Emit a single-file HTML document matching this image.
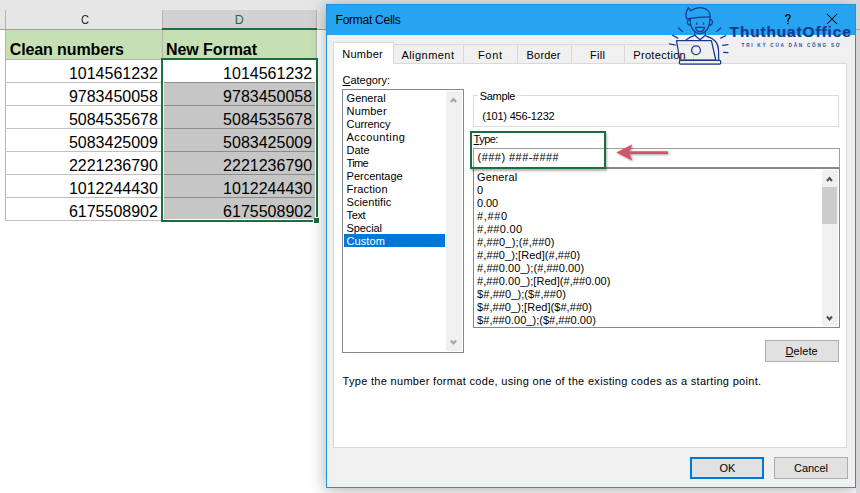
<!DOCTYPE html>
<html><head><meta charset="utf-8"><style>
html,body{margin:0;padding:0;width:860px;height:493px;overflow:hidden;background:#fff;position:relative}
body>div,body>svg{position:absolute}
.t{position:absolute;white-space:nowrap;font-family:"Liberation Sans",sans-serif}
u{text-decoration:underline;text-underline-offset:1px}
</style></head><body>
<div style="left:0px;top:0px;width:326px;height:29px;background:#e6e6e6"></div>
<div style="left:163px;top:10px;width:153px;height:18px;background:#d2d2d2"></div>
<div style="left:5px;top:10px;width:1px;height:19px;background:#b4b4b4"></div>
<div style="left:162px;top:10px;width:1px;height:19px;background:#b4b4b4"></div>
<div style="left:316px;top:10px;width:1px;height:19px;background:#b4b4b4"></div>
<div style="left:0px;top:29px;width:326px;height:1px;background:#9e9e9e"></div>
<div style="left:162px;top:28px;width:155px;height:2px;background:#1b6e3f"></div>
<div style="left:6px;top:30px;width:310px;height:29px;background:#c6e0b4"></div>
<div style="left:5px;top:30px;width:1px;height:191px;background:#b4b4b4"></div>
<div style="left:162px;top:30px;width:1px;height:29px;background:#b4b4b4"></div>
<div style="left:5px;top:59px;width:157px;height:1px;background:#b4b4b4"></div>
<div style="left:316px;top:30px;width:1px;height:28px;background:#b4b4b4"></div>
<div style="left:164px;top:83px;width:151px;height:136px;background:#c6c6c6"></div>
<div style="left:5px;top:82px;width:156px;height:1px;background:#c0c0c0"></div>
<div style="left:164px;top:82px;width:151px;height:1px;background:#8c8c8c"></div>
<div style="left:5px;top:105px;width:156px;height:1px;background:#c0c0c0"></div>
<div style="left:164px;top:105px;width:151px;height:1px;background:#8c8c8c"></div>
<div style="left:5px;top:128px;width:156px;height:1px;background:#c0c0c0"></div>
<div style="left:164px;top:128px;width:151px;height:1px;background:#8c8c8c"></div>
<div style="left:5px;top:151px;width:156px;height:1px;background:#c0c0c0"></div>
<div style="left:164px;top:151px;width:151px;height:1px;background:#8c8c8c"></div>
<div style="left:5px;top:174px;width:156px;height:1px;background:#c0c0c0"></div>
<div style="left:164px;top:174px;width:151px;height:1px;background:#8c8c8c"></div>
<div style="left:5px;top:197px;width:156px;height:1px;background:#c0c0c0"></div>
<div style="left:164px;top:197px;width:151px;height:1px;background:#8c8c8c"></div>
<div style="left:5px;top:220px;width:156px;height:1px;background:#c0c0c0"></div>
<div style="left:161px;top:58px;width:157px;height:2px;background:#1b6e3f"></div>
<div style="left:161px;top:58px;width:2px;height:164px;background:#1b6e3f"></div>
<div style="left:316px;top:58px;width:2px;height:159px;background:#1b6e3f"></div>
<div style="left:161px;top:220px;width:152px;height:2px;background:#1b6e3f"></div>
<div style="left:314px;top:218px;width:5px;height:5px;background:#1b6e3f"></div>
<div style="left:316px;top:0px;width:544px;height:10px;background:#e6e6e6"></div>
<div style="left:326px;top:4px;width:530px;height:484px;background:#f0f0f0;box-sizing:border-box;border:1px solid #1894ea;box-shadow:0 2px 16px rgba(0,0,0,0.33)"></div>
<div style="left:327px;top:5px;width:528px;height:30px;background:#27a4f1"></div>
<div style="left:856px;top:0px;width:4px;height:493px;background:linear-gradient(180deg,#d6d6d6 0px,#d6d6d6 29px,#a8a8a8 29px,#a8a8a8 30px,#d4d4d4 30px,#d4d4d4 480px,#d8d8d8 493px)"></div>
<div style="left:333px;top:63px;width:514px;height:385px;background:#fff;box-sizing:border-box;border:1px solid #d9d9d9"></div>
<div style="left:393px;top:44px;width:71px;height:20px;background:#f0f0f0;box-sizing:border-box;border:1px solid #d9d9d9"></div>
<div style="left:463px;top:44px;width:55px;height:20px;background:#f0f0f0;box-sizing:border-box;border:1px solid #d9d9d9"></div>
<div style="left:517px;top:44px;width:55px;height:20px;background:#f0f0f0;box-sizing:border-box;border:1px solid #d9d9d9"></div>
<div style="left:571px;top:44px;width:54px;height:20px;background:#f0f0f0;box-sizing:border-box;border:1px solid #d9d9d9"></div>
<div style="left:624px;top:44px;width:70px;height:20px;background:#f0f0f0;box-sizing:border-box;border:1px solid #d9d9d9"></div>
<div style="left:333px;top:42px;width:61px;height:22px;background:#fff;box-sizing:border-box;border:1px solid #d9d9d9;border-bottom:none"></div>
<div style="left:342px;top:89px;width:122px;height:264px;background:#fff;box-sizing:border-box;border:1px solid #828790"></div>
<div style="left:446px;top:91px;width:16px;height:260px;background:#f0f0f0"></div>
<div style="left:344px;top:234px;width:101px;height:13px;background:#0078d7"></div>
<div style="left:473px;top:95px;width:366px;height:32px;box-sizing:border-box;border:1px solid #dcdcdc"></div>
<div style="left:478px;top:90px;width:39px;height:10px;background:#fff"></div>
<div style="left:473px;top:148px;width:367px;height:20px;background:#fff;box-sizing:border-box;border:1px solid #a0a0a0;border-bottom-color:#8a8a8a"></div>
<div style="left:473px;top:168px;width:367px;height:160px;background:#fff;box-sizing:border-box;border:1px solid #828790"></div>
<div style="left:822px;top:170px;width:16px;height:156px;background:#f0f0f0"></div>
<div style="left:822px;top:187px;width:15px;height:37px;background:#cdcdcd"></div>
<div style="left:765px;top:340px;width:74px;height:22px;background:#e1e1e1;box-sizing:border-box;border:1px solid #adadad"></div>
<div style="left:690px;top:457px;width:74px;height:22px;background:#e1e1e1;box-sizing:border-box;border:2px solid #0078d7"></div>
<div style="left:774px;top:457px;width:74px;height:22px;background:#e1e1e1;box-sizing:border-box;border:1px solid #adadad"></div>
<div class="t" style="left:80.60px;top:11px;font-size:12.5px;line-height:18px;color:#262626;transform-origin:0 0;transform:scaleX(0.9);">C</div>
<div class="t" style="left:234.70px;top:11px;font-size:12.5px;line-height:18px;color:#1b6e3f;">D</div>
<div class="t" style="left:9.80px;top:39px;font-size:16px;line-height:22px;color:#000;font-weight:bold;letter-spacing:-0.12px;">Clean numbers</div>
<div class="t" style="left:166.00px;top:39px;font-size:16px;line-height:22px;color:#000;font-weight:bold;letter-spacing:-0.06px;">New Format</div>
<div class="t" style="left:68.91px;top:63px;font-size:16px;line-height:22px;color:#000;">1014561232</div>
<div class="t" style="left:223.11px;top:63px;font-size:16px;line-height:22px;color:#000;">1014561232</div>
<div class="t" style="left:68.91px;top:86px;font-size:16px;line-height:22px;color:#000;">9783450058</div>
<div class="t" style="left:223.11px;top:86px;font-size:16px;line-height:22px;color:#000;">9783450058</div>
<div class="t" style="left:68.91px;top:109px;font-size:16px;line-height:22px;color:#000;">5084535678</div>
<div class="t" style="left:223.11px;top:109px;font-size:16px;line-height:22px;color:#000;">5084535678</div>
<div class="t" style="left:68.91px;top:132px;font-size:16px;line-height:22px;color:#000;">5083425009</div>
<div class="t" style="left:223.11px;top:132px;font-size:16px;line-height:22px;color:#000;">5083425009</div>
<div class="t" style="left:68.91px;top:155px;font-size:16px;line-height:22px;color:#000;">2221236790</div>
<div class="t" style="left:223.11px;top:155px;font-size:16px;line-height:22px;color:#000;">2221236790</div>
<div class="t" style="left:68.91px;top:178px;font-size:16px;line-height:22px;color:#000;">1012244430</div>
<div class="t" style="left:223.11px;top:178px;font-size:16px;line-height:22px;color:#000;">1012244430</div>
<div class="t" style="left:68.91px;top:201px;font-size:16px;line-height:22px;color:#000;">6175508902</div>
<div class="t" style="left:223.11px;top:201px;font-size:16px;line-height:22px;color:#000;">6175508902</div>
<div class="t" style="left:335.60px;top:12px;font-size:12px;line-height:17px;color:#000;letter-spacing:-0.26px;">Format Cells</div>
<div class="t" style="left:342.30px;top:47px;font-size:11px;line-height:15px;color:#000;letter-spacing:0.25px;">Number</div>
<div class="t" style="left:401.40px;top:48px;font-size:11px;line-height:15px;color:#000;letter-spacing:0.46px;">Alignment</div>
<div class="t" style="left:478.00px;top:48px;font-size:11px;line-height:15px;color:#000;letter-spacing:0.65px;">Font</div>
<div class="t" style="left:526.60px;top:48px;font-size:11px;line-height:15px;color:#000;letter-spacing:0.17px;">Border</div>
<div class="t" style="left:590.00px;top:48px;font-size:11px;line-height:15px;color:#000;letter-spacing:0.33px;">Fill</div>
<div class="t" style="left:633.30px;top:48px;font-size:11px;line-height:15px;color:#000;letter-spacing:0.32px;">Protection</div>
<div class="t" style="left:342.50px;top:73px;font-size:11px;line-height:15px;color:#000;letter-spacing:-0.02px;"><u>C</u>ategory:</div>
<div class="t" style="left:346.60px;top:91px;font-size:11px;line-height:15px;color:#000;letter-spacing:-0.01px;">General</div>
<div class="t" style="left:346.60px;top:104px;font-size:11px;line-height:15px;color:#000;letter-spacing:0.17px;">Number</div>
<div class="t" style="left:346.60px;top:117px;font-size:11px;line-height:15px;color:#000;letter-spacing:-0.12px;">Currency</div>
<div class="t" style="left:346.60px;top:130px;font-size:11px;line-height:15px;color:#000;letter-spacing:0.42px;">Accounting</div>
<div class="t" style="left:346.60px;top:143px;font-size:11px;line-height:15px;color:#000;letter-spacing:-0.07px;">Date</div>
<div class="t" style="left:346.60px;top:156px;font-size:11px;line-height:15px;color:#000;letter-spacing:-0.64px;">Time</div>
<div class="t" style="left:346.60px;top:169px;font-size:11px;line-height:15px;color:#000;letter-spacing:-0.02px;">Percentage</div>
<div class="t" style="left:346.60px;top:182px;font-size:11px;line-height:15px;color:#000;letter-spacing:0.17px;">Fraction</div>
<div class="t" style="left:346.60px;top:195px;font-size:11px;line-height:15px;color:#000;letter-spacing:0.06px;">Scientific</div>
<div class="t" style="left:346.60px;top:208px;font-size:11px;line-height:15px;color:#000;letter-spacing:-0.37px;">Text</div>
<div class="t" style="left:346.60px;top:221px;font-size:11px;line-height:15px;color:#000;letter-spacing:-0.12px;">Special</div>
<div class="t" style="left:346.60px;top:234px;font-size:11px;line-height:15px;color:#fff;letter-spacing:0.07px;">Custom</div>
<div class="t" style="left:479.80px;top:89px;font-size:11px;line-height:15px;color:#000;letter-spacing:-0.34px;">Sample</div>
<div class="t" style="left:482.20px;top:109px;font-size:11px;line-height:15px;color:#000;letter-spacing:-0.21px;">(101) 456-1232</div>
<div class="t" style="left:473.60px;top:132px;font-size:11px;line-height:15px;color:#000;letter-spacing:-0.54px;"><u>T</u>ype:</div>
<div class="t" style="left:477.60px;top:150px;font-size:11px;line-height:15px;color:#000;letter-spacing:0.45px;">(###) ###-####</div>
<div class="t" style="left:477.10px;top:170px;font-size:11px;line-height:15px;color:#000;letter-spacing:0.15px;">General</div>
<div class="t" style="left:477.10px;top:183px;font-size:11px;line-height:15px;color:#000;">0</div>
<div class="t" style="left:477.10px;top:196px;font-size:11px;line-height:15px;color:#000;letter-spacing:-0.16px;">0.00</div>
<div class="t" style="left:477.10px;top:209px;font-size:11px;line-height:15px;color:#000;letter-spacing:0.65px;">#,##0</div>
<div class="t" style="left:477.10px;top:222px;font-size:11px;line-height:15px;color:#000;letter-spacing:0.31px;">#,##0.00</div>
<div class="t" style="left:477.10px;top:235px;font-size:11px;line-height:15px;color:#000;letter-spacing:0.15px;">#,##0_);(#,##0)</div>
<div class="t" style="left:477.10px;top:248px;font-size:11px;line-height:15px;color:#000;letter-spacing:0.08px;">#,##0_);[Red](#,##0)</div>
<div class="t" style="left:477.10px;top:261px;font-size:11px;line-height:15px;color:#000;letter-spacing:0.06px;">#,##0.00_);(#,##0.00)</div>
<div class="t" style="left:477.10px;top:274px;font-size:11px;line-height:15px;color:#000;letter-spacing:0.05px;">#,##0.00_);[Red](#,##0.00)</div>
<div class="t" style="left:477.10px;top:287px;font-size:11px;line-height:15px;color:#000;letter-spacing:0.08px;">$#,##0_);($#,##0)</div>
<div class="t" style="left:477.10px;top:300px;font-size:11px;line-height:15px;color:#000;letter-spacing:0.05px;">$#,##0_);[Red]($#,##0)</div>
<div class="t" style="left:477.10px;top:313px;font-size:11px;line-height:15px;color:#000;letter-spacing:0.03px;">$#,##0.00_);($#,##0.00)</div>
<div class="t" style="left:785.60px;top:344px;font-size:11px;line-height:15px;color:#000;letter-spacing:0.04px;"><u>D</u>elete</div>
<div class="t" style="left:342.50px;top:374px;font-size:11px;line-height:15px;color:#000;letter-spacing:0.31px;">Type the number format code, using one of the existing codes as a starting point.</div>
<div class="t" style="left:719.50px;top:461px;font-size:11px;line-height:15px;color:#000;">OK</div>
<div class="t" style="left:794.00px;top:461px;font-size:11px;line-height:15px;color:#000;letter-spacing:-0.06px;">Cancel</div>
<svg style="position:absolute;left:783px;top:13px" width="10" height="12"><path d="M2.6 4C2.6 2.3 3.5 1.6 4.8 1.6C6.1 1.6 7 2.4 7 3.7C7 5.3 4.8 5.9 4.8 7.9V8.8" fill="none" stroke="#000" stroke-width="1.3"/><rect x="4.1" y="9.8" width="1.4" height="1.4" fill="#000"/></svg>
<svg style="position:absolute;left:826px;top:13px" width="12" height="12"><path d="M1 1L11 11M11 1L1 11" stroke="#000" stroke-width="1.05"/></svg>
<svg style="position:absolute;left:449px;top:96px" width="10" height="8"><path d="M1.9 6L4.5 3L7.1 6" fill="none" stroke="#a6a6a6" stroke-width="2"/></svg>
<svg style="position:absolute;left:449px;top:338px" width="10" height="8"><path d="M1.9 2.5L4.5 5.5L7.1 2.5" fill="none" stroke="#a6a6a6" stroke-width="2"/></svg>
<svg style="position:absolute;left:825px;top:175px" width="10" height="8"><path d="M2 6L4.5 3L7 6" fill="none" stroke="#505050" stroke-width="2"/></svg>
<svg style="position:absolute;left:825px;top:314px" width="10" height="8"><path d="M2 2.5L4.5 5.5L7 2.5" fill="none" stroke="#505050" stroke-width="2"/></svg>
<div style="left:470px;top:131px;width:136px;height:38px;box-sizing:border-box;border:2px solid #1b6e3f;box-shadow:1px 1.5px 2px rgba(0,0,0,0.3)"></div>
<svg style="position:absolute;left:612px;top:140px;filter:drop-shadow(1px 1.5px 1px rgba(0,0,0,0.35))" width="60" height="24"><path d="M4.3 12.6L20.3 4.2L17.6 11.2L56 11.2L56 14.1L17.6 14.1L20.3 20.5Z" fill="#d35468"/></svg>
<svg style="position:absolute;left:660px;top:0px" width="200" height="70" viewBox="660 0 200 70" fill="none" stroke="#18388e" stroke-width="1.25" stroke-linecap="round" stroke-linejoin="round">
<path d="M688.4 7.8L690.9 10.9C693 8.8 698 7.3 702 7.8C707 8.5 710.5 12 710.3 17.5L709.8 20"/>
<path d="M688.4 7.8C686.2 10.5 685.6 15 686.6 18.8C694 17.6 702 16.8 709.8 16.8"/>
<path d="M690.2 19.5C690 28 694.5 33.6 699.8 33.6C705.5 33.6 709.8 28 709.8 19.5"/>
<path d="M690.4 19.8C686.5 19 686 24.5 690.6 25.3M709.4 19.8C713.3 19 713.8 24.5 709.2 25.3"/>
<path d="M696.7 22.8v1.5M703.6 22.8v1.5"/>
<path d="M695.5 27.4 H704.4 C704 30.5 702 31.7 699.9 31.7 C697.8 31.7 696 30.5 695.5 27.4Z"/>
<path d="M694.8 32.9V35.3L700 39.8L705.3 35.3V32.9"/>
<path d="M686.2 39.8C689 37.5 692 36 694.8 35.3M706.1 36.1C713 38 718.3 42 718.5 50 L718.7 60"/>
<path d="M676.5 40.6H711.4L715.8 60H679.8Z"/>
<rect x="679.4" y="60.4" width="41.3" height="3.7" rx="1.2"/>
<circle cx="696" cy="50.3" r="4.4"/>
<path d="M678.5 28L682.6 31.6M716.7 31.6L720.7 28M672.5 35.3L677.7 38.1M669.6 43.8L675.3 45M720.7 38.1L725.6 35.7M722.7 45.4L728 44.6M723.6 52.3L728 52.7"/>
</svg>
<div class="t" style="left:729.60px;top:21px;font-size:15.4px;line-height:22px;color:#18388e;font-weight:bold;letter-spacing:0.90px;-webkit-text-stroke:0.2px #18388e;">ThuthuatOffice</div>
<div class="t" style="left:741.60px;top:42px;font-size:4.7px;line-height:7px;color:#2c4a9e;font-weight:bold;letter-spacing:1.73px;">TRI KỲ CỦA DÂN CÔNG SỞ</div>
</body></html>
